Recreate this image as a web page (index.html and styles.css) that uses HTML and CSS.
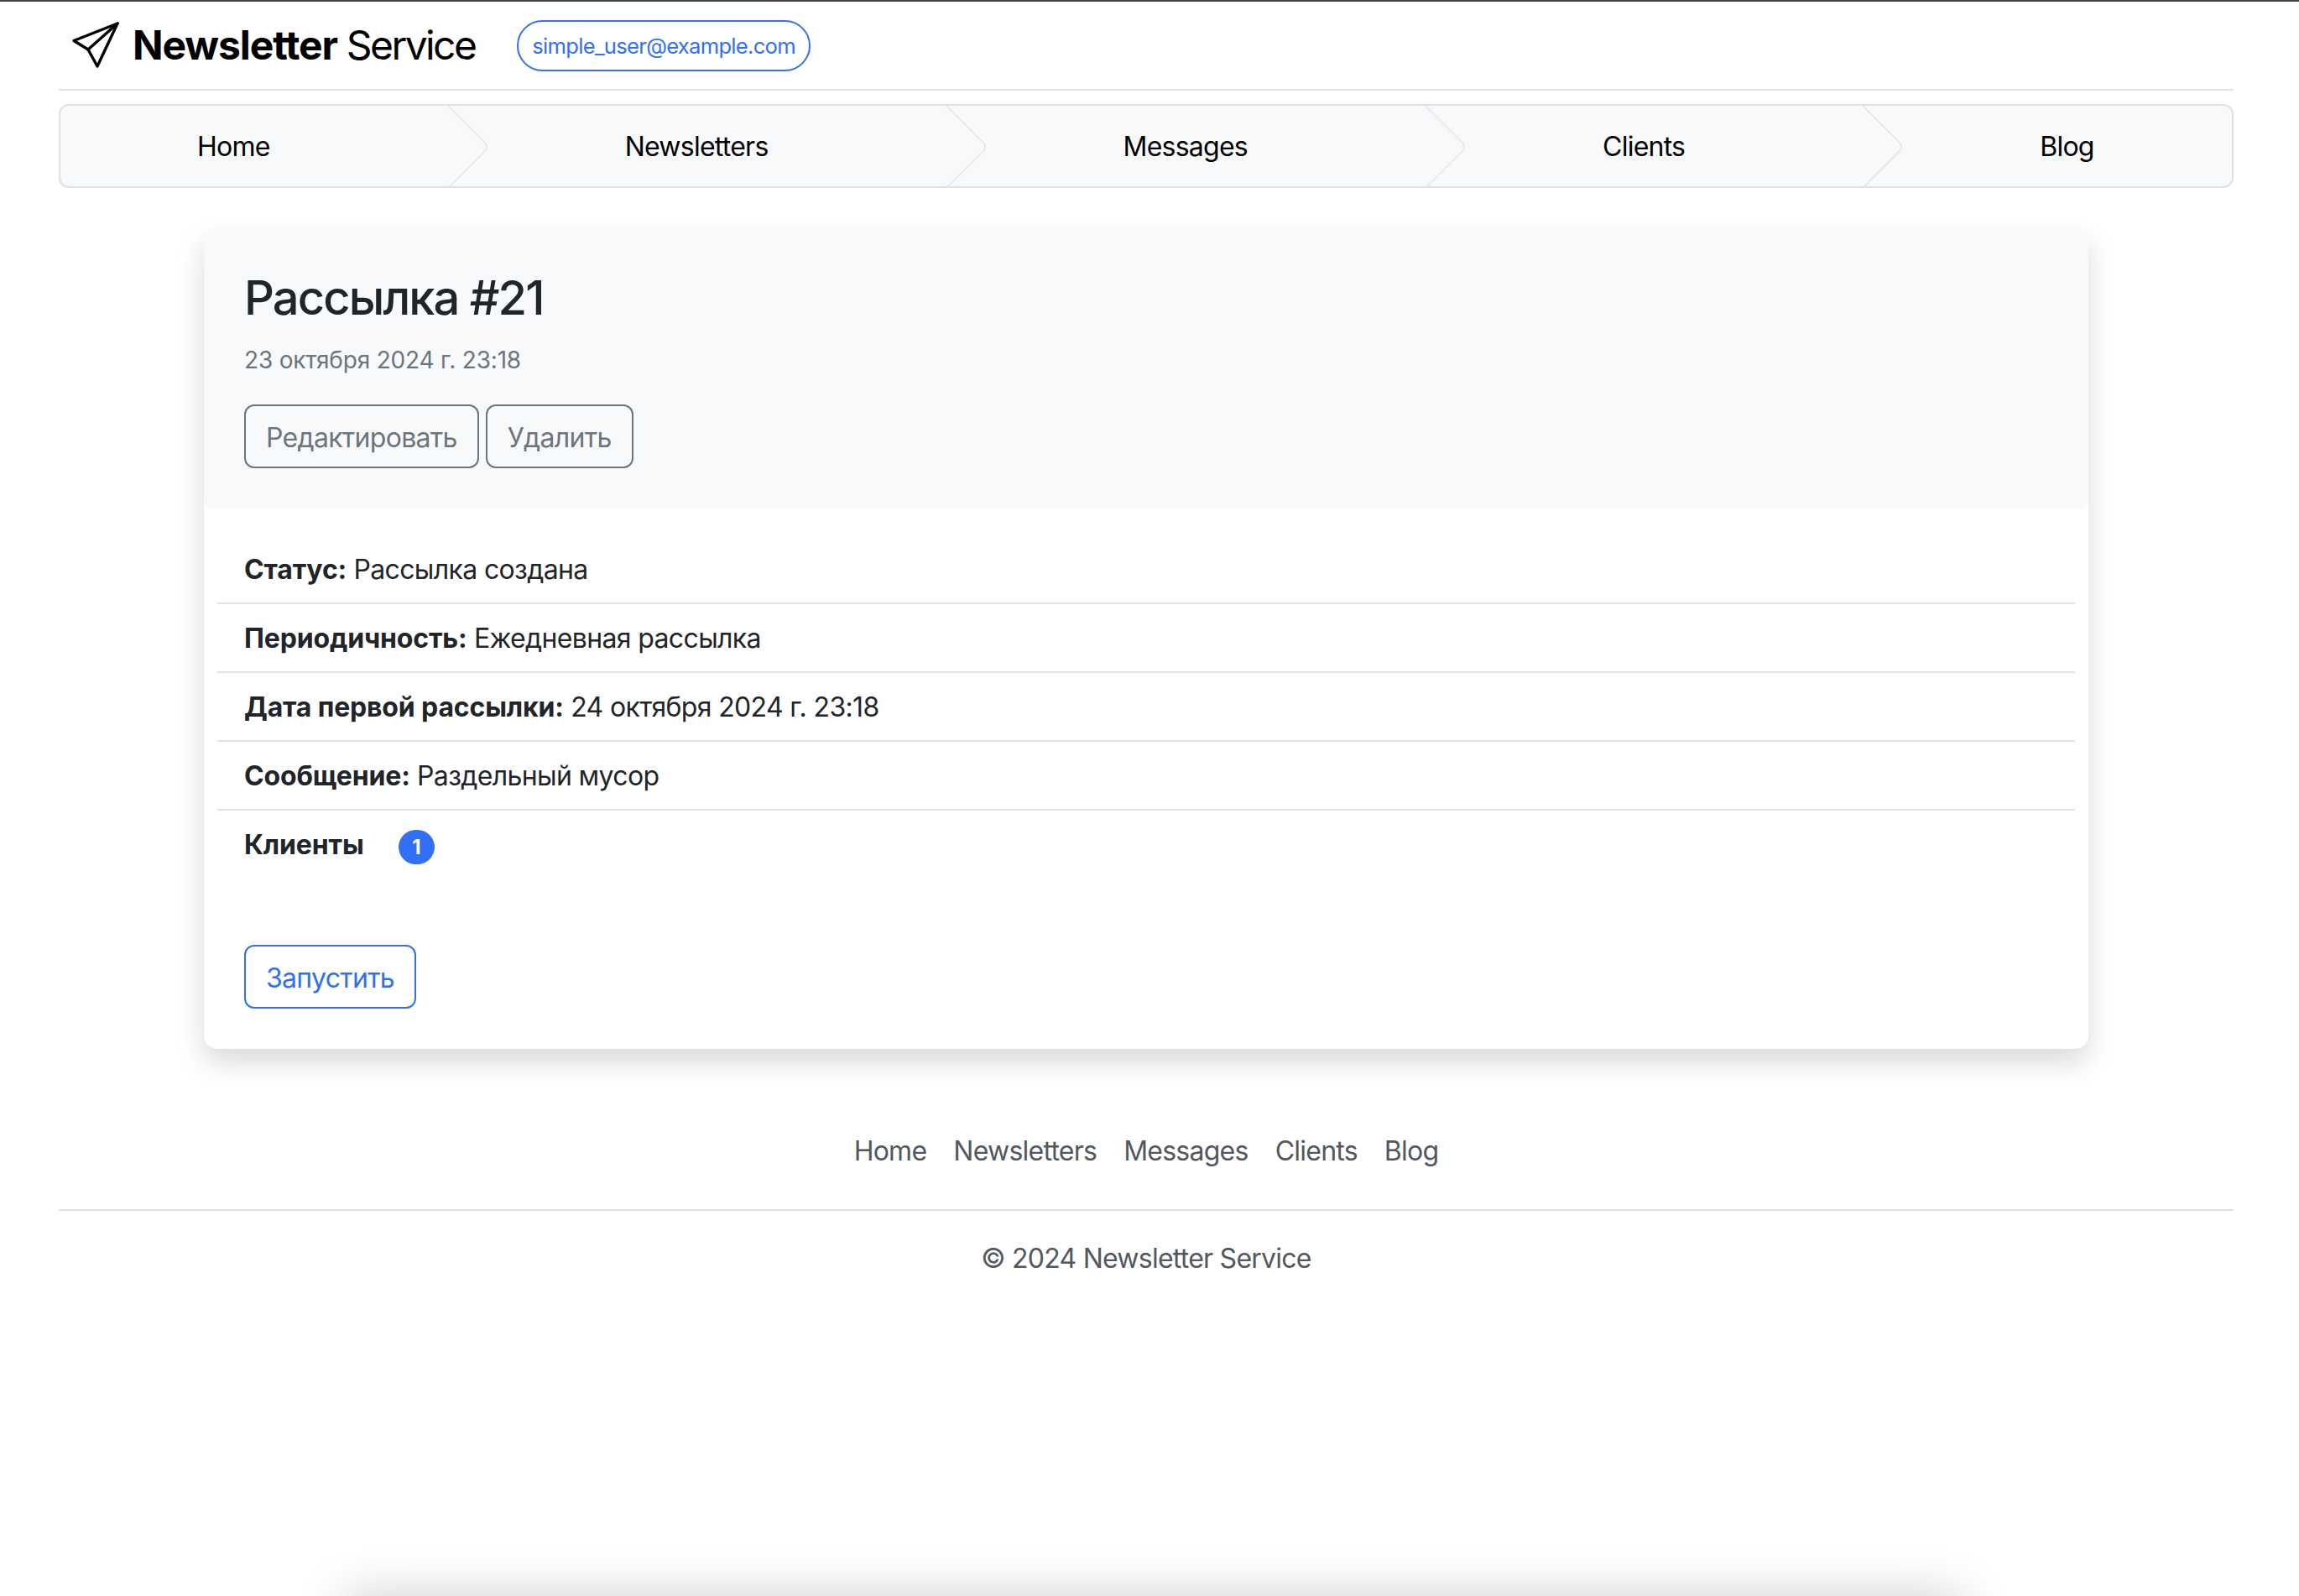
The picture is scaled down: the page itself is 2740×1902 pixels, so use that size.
FILE: index.html
```html
<!DOCTYPE html>
<html lang="ru">
<head>
<meta charset="utf-8">
<title>Newsletter Service</title>
<link rel="stylesheet" href="styles.css">
</head>
<body>
<div class="page">
  <header class="topbar">
    <a class="brand" href="#">
      <svg class="brand-icon" viewBox="0 0 56 56" fill="none" stroke="#000" stroke-width="3.4" stroke-linejoin="round" stroke-linecap="round"><path d="M54 2 L2 22.500 L19 33 L30 53 Z"/><path d="M54 2 L19 33"/></svg>
      <span class="brand-text"><b class="brand-strong">Newsletter</b> Service</span>
    </a>
    <span class="user-pill">simple_user@example.com</span>
  </header>
  <nav class="steps">
    <a class="step" href="#">Home</a>
    <a class="step" href="#">Newsletters</a>
    <a class="step" href="#">Messages</a>
    <a class="step" href="#">Clients</a>
    <a class="step" href="#">Blog</a>
  </nav>
  <main class="card">
    <section class="card-head">
      <h1 class="title">Рассылка #21</h1>
      <p class="date">23 октября 2024 г. 23:18</p>
      <div class="actions">
        <a class="btn btn-grey" href="#">Редактировать</a>
        <a class="btn btn-grey" href="#">Удалить</a>
      </div>
    </section>
    <section class="card-body">
      <ul class="list">
        <li class="item"><b>Статус:</b> Рассылка создана</li>
        <li class="item"><b>Периодичность:</b> Ежедневная рассылка</li>
        <li class="item"><b>Дата первой рассылки:</b> 24 октября 2024 г. 23:18</li>
        <li class="item"><b>Сообщение:</b> Раздельный мусор</li>
        <li class="item item-last"><b>Клиенты</b><span class="count">1</span></li>
      </ul>
      <a class="btn btn-blue" href="#">Запустить</a>
    </section>
  </main>
  <footer class="footer">
    <div class="foot-links">
      <a href="#">Home</a>
      <a href="#">Newsletters</a>
      <a href="#">Messages</a>
      <a href="#">Clients</a>
      <a href="#">Blog</a>
    </div>
    <p class="copy">© 2024 Newsletter Service</p>
  </footer>
  <div class="window-shadow"></div>
</div>
</body>
</html>
```
FILE: styles.css
```css
* { box-sizing: border-box; }
html, body { margin: 0; padding: 0; height: 100%; overflow: hidden; background: #fff; }
body { font-family: Inter, "Noto Sans", sans-serif; font-size: 32px; line-height: 48px; letter-spacing: -0.75px; color: #212529; }
a { text-decoration: none; color: inherit; }
b { font-weight: 700; letter-spacing: -0.15px; }

.page { position: relative; height: 100vh; padding: 0 78px 0 70px; border-top: 2px solid #444; overflow: hidden; }

.topbar { display: flex; align-items: center; height: 106px; padding: 0 16px; border-bottom: 2px solid #dee2e6; }
.brand { display: flex; align-items: center; gap: 16px; color: #000; }
.brand-icon { width: 56px; height: 56px; }
.brand-text { font-size: 48px; line-height: 60px; letter-spacing: -2.6px; }
.brand-strong { letter-spacing: -1.1px; }
.user-pill { margin-left: 50px; padding: 0 16px; height: 61px; line-height: 57px; font-size: 25.6px; letter-spacing: -0.72px; color: #316ff5; border: 2px solid #316ff5; border-radius: 31px; }

.steps { display: flex; height: 100px; margin-top: 16px; background: #f8f9fa; border: 2px solid #dee2e6; border-radius: 12px; overflow: hidden; }
.step { position: relative; display: block; padding: 0 260px 0 163px; line-height: 98px; color: #000; white-space: nowrap; }
.step:last-child { padding-right: 0; }
.step:not(:last-child)::after { content: ""; position: absolute; top: 14px; right: 12px; width: 68px; height: 68px; border-top: 2px solid #e6e8ea; border-right: 2px solid #e6e8ea; border-top-right-radius: 8px; transform: rotate(45deg); }

.card { width: 2246px; margin: 48px 0 0 173px; background: #fff; border-radius: 16px; box-shadow: 0 16px 32px rgba(0,0,0,.15); }
.card-head { height: 334px; padding: 50px 48px 48px; background: #f8f9fa; border-radius: 16px 16px 8px 8px; }
.title { margin: 0; font-size: 56px; line-height: 67px; font-weight: 550; letter-spacing: -1.85px; }
.date { margin: 19px 0 0; font-size: 28px; line-height: 42px; letter-spacing: -0.2px; color: #6c757d; }
.actions { display: flex; gap: 8px; margin-top: 32px; }
.btn { display: inline-block; height: 76px; padding: 12px 24px; line-height: 52px; letter-spacing: -0.7px; border: 2px solid; border-radius: 12px; }
.btn-grey { color: #6c757d; border-color: #6c757d; }
.btn-blue { color: #316ff5; border-color: #316ff5; }

.card-body { padding: 32px 16px 48px; }
.list { margin: 0; padding: 0; list-style: none; }
.item { height: 82px; padding: 17px 32px 0; letter-spacing: -0.65px; border-bottom: 2px solid #dee2e6; }
.item-last { display: flex; align-items: flex-start; height: 160px; border-bottom: 0; }
.count { display: block; width: 43px; height: 41px; margin: 6px 0 0 41px; border-radius: 21px; background: #316ff5; color: #fff; font-size: 24px; font-weight: 700; line-height: 41px; text-align: center; }
.card-body > .btn { margin-left: 32px; }

.footer { margin-top: 98px; color: #52585e; text-align: center; }
.foot-links { display: flex; justify-content: center; gap: 32px; padding-bottom: 45px; border-bottom: 2px solid #dee2e6; }
.copy { margin: 33px 0 0; }

.window-shadow { position: absolute; top: 1900px; left: 410px; width: 1930px; height: 200px; border-radius: 20px; box-shadow: 0 0 60px rgba(0,0,0,.2); }
```
